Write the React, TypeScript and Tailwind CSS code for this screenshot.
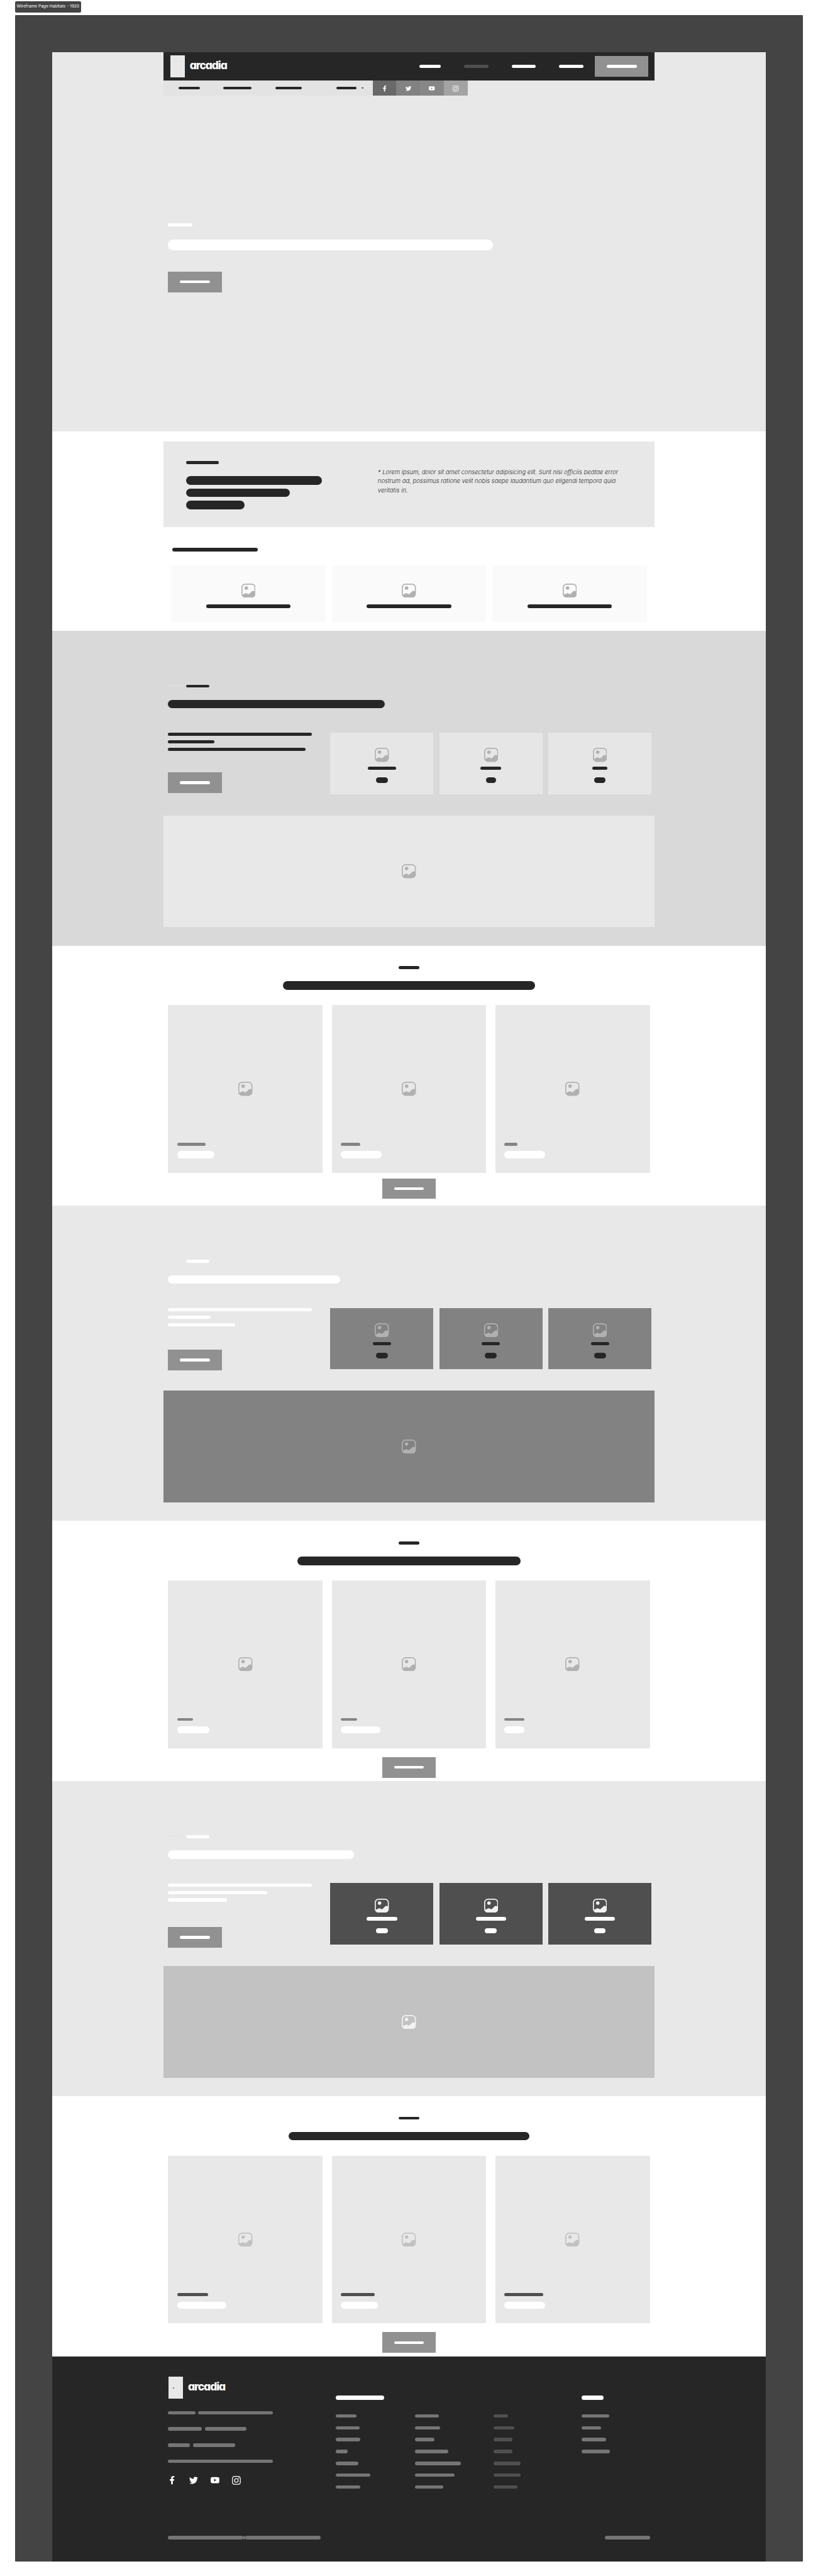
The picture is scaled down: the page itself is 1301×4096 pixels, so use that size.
import type { ReactNode } from "react";
import { FaFacebookF, FaTwitter } from "react-icons/fa";
import { BsYoutube, BsInstagram } from "react-icons/bs";

// One spacing step equals one wireframe unit; see --spacing on the root element.
const units = (n: number) => `calc(var(--spacing) * ${n})`;

function Bar({ w, className }: { w: number; className: string }) {
  return <div className={`shrink-0 rounded-full ${className}`} style={{ width: units(w) }} />;
}

function Placeholder({ className = "text-[#b1b1b1]" }: { className?: string }) {
  return (
    <svg viewBox="0 0 38 38" className={`size-38 shrink-0 ${className}`} fill="none">
      <rect x="1.4" y="1.4" width="35.2" height="35.2" rx="9.2" stroke="currentColor" strokeWidth="2.8" />
      <circle cx="13" cy="11.7" r="4.7" fill="currentColor" />
      <path
        d="M2 30.6 10.4 26.2Q12.3 25.2 14.2 26.3L17.4 28.1Q19.3 28.8 21.2 27.6L28.6 20.4Q31.3 18.4 34 20L36.5 21.8V28.5Q36 36.6 28 37H10Q3 36.6 2 30.6Z"
        fill="currentColor"
      />
    </svg>
  );
}

function Button({ className = "h-56" }: { className?: string }) {
  return (
    <div className={`flex w-144 shrink-0 items-center justify-center bg-[#919191] ${className}`}>
      <Bar w={81} className="h-8 bg-white" />
    </div>
  );
}

function Logo({ dot = false }: { dot?: boolean }) {
  return (
    <div className="flex items-center gap-13">
      <div className="h-59.5 w-39 bg-[#e8e8e8]">
        {dot && <div className="mt-29 ml-11.5 size-4 rounded-full bg-[#555]" />}
      </div>
      <div className="-mt-7 font-['Inter'] text-[17.4px] leading-none font-extrabold tracking-[-0.06em] text-white [font-feature-settings:'cv11']">
        arcadia
      </div>
    </div>
  );
}

function Social({ className, children }: { className: string; children: ReactNode }) {
  return <div className={`flex h-40 w-64 items-center justify-center pt-2 text-white ${className}`}>{children}</div>;
}

function Hero() {
  return (
    <section className="h-1020 bg-[#e8e8e8]">
      <div className="mx-auto w-1320">
        <header className="flex h-77.25 items-center justify-between bg-[#262626] pr-16 pl-18">
          <Logo />
          <nav className="flex items-center">
            <Bar w={58} className="mr-63 h-8 bg-white" />
            <Bar w={65} className="mr-62.5 h-8 bg-[#4f4f4f]" />
            <Bar w={65} className="mr-62.5 h-8 bg-white" />
            <Bar w={65} className="mr-31.5 h-8 bg-white" />
            <Button className="h-55.5" />
          </nav>
        </header>
        <div className="flex">
          <div className="flex h-40 w-562 items-center bg-[#e3e3e3] pl-40">
            <Bar w={57} className="mr-63.5 h-7.5 bg-[#262626]" />
            <Bar w={76} className="mr-63.5 h-7.5 bg-[#262626]" />
            <Bar w={71} className="mr-94 h-7.5 bg-[#262626]" />
            <Bar w={54} className="mr-13 h-7.5 bg-[#262626]" />
            <svg viewBox="0 0 6 4" className="-mt-1 h-4 w-6">
              <path d="M0 0h6L3 4z" fill="#262626" />
            </svg>
          </div>
          <Social className="bg-[#696969]"><FaFacebookF className="size-16" /></Social>
          <Social className="bg-[#828282]"><FaTwitter className="size-16" /></Social>
          <Social className="bg-[#878787]"><BsYoutube className="size-16" /></Social>
          <Social className="bg-[#a3a3a3]"><BsInstagram className="size-16" /></Social>
        </div>
        <div className="px-12 pt-343">
          <Bar w={66} className="h-8 bg-white" />
          <Bar w={873.5} className="mt-37 h-28 bg-white" />
          <div className="mt-57">
            <Button className="h-55.5" />
          </div>
        </div>
      </div>
    </section>
  );
}

function Intro() {
  return (
    <section className="h-535.75 bg-white pt-27">
      <div className="mx-auto flex h-230.5 w-1320 bg-[#e8e8e8] pl-60">
        <div className="w-516 pt-53">
          <Bar w={88.5} className="h-8 bg-[#262626]" />
          <Bar w={365} className="mt-33 h-23 bg-[#262626]" />
          <Bar w={279} className="mt-10 h-23 bg-[#262626]" />
          <Bar w={158} className="mt-10 h-23 bg-[#262626]" />
        </div>
        <p className="pt-71.5 font-['Inter'] text-[9.46px] leading-[14.25px] font-light tracking-[0.002em] whitespace-nowrap text-[#262626] italic">
          * Lorem ipsum, dolor sit amet consectetur adipisicing elit. Sunt nisi officiis beatae error
          <br />
          nostrum ad, possimus ratione velit nobis saepe laudantium quo eligendi tempora quia
          <br />
          veritatis in.
        </p>
      </div>
      <div className="mx-auto w-1280 pt-55.5">
        <Bar w={230} className="ml-4 h-10 bg-[#262626]" />
        <div className="mt-38 flex gap-16">
          {[0, 1, 2].map((i) => (
            <div key={i} className="flex h-151 w-416 flex-col items-center bg-[#fafafa] pt-48.5">
              <Placeholder />
              <Bar w={227} className="mt-18 h-10.5 bg-[#262626]" />
            </div>
          ))}
        </div>
      </div>
    </section>
  );
}

type HabitatProps = {
  bg: string;
  line: string;
  text: string;
  title: number;
  lines: number[];
  buttonGap: string;
  card: string;
  cardText: string;
  icon: string;
  labels: number[];
  counts: number[];
  image: string;
};

function Habitat(p: HabitatProps) {
  return (
    <section className={`h-847.25 pt-145.5 ${p.bg}`}>
      <div className="mx-auto w-1320">
        <div className="pl-12">
          <div className="flex gap-8">
            <div className={`mt-2 h-1.75 w-40 ${p.line}`} />
            <Bar w={63.5} className={`h-7.5 ${p.text}`} />
          </div>
          <Bar w={p.title} className={`mt-33.5 h-23 ${p.text}`} />
          <div className="mt-65 flex h-165.5">
            <div className="w-436.5">
              <div className="flex flex-col gap-11 pt-0.5">
                {p.lines.map((w, i) => (
                  <Bar key={i} w={w} className={`h-9 ${p.text}`} />
                ))}
              </div>
              <div className={p.buttonGap}>
                <Button />
              </div>
            </div>
            <div className="flex gap-16">
              {p.labels.map((w, i) => (
                <div key={i} className={`flex w-277.25 flex-col items-center pt-41.25 ${p.card}`}>
                  <Placeholder className={p.icon} />
                  <Bar w={w} className={`mt-12 h-9 ${p.cardText}`} />
                  <Bar w={p.counts[i]} className={`mt-21 h-14 ${p.cardText}`} />
                </div>
              ))}
            </div>
          </div>
        </div>
        <div className={`mt-57.5 flex h-300 items-center justify-center ${p.image}`}>
          <Placeholder className={p.icon} />
        </div>
      </div>
    </section>
  );
}

type GalleryProps = {
  title: number;
  captions: number[];
  names: number[];
  caption: string;
  icon: string;
  buttonGap: string;
};

function Gallery(p: GalleryProps) {
  return (
    <section className="flex h-700 flex-col items-center bg-white pt-55">
      <Bar w={57} className="h-8 bg-[#262626]" />
      <Bar w={p.title} className="mt-33 h-23 bg-[#262626]" />
      <div className="mt-41 flex gap-24">
        {p.captions.map((w, i) => (
          <div key={i} className="h-451 w-416 bg-[#e8e8e8] px-24 pt-206.5">
            <div className="flex justify-center">
              <Placeholder className={p.icon} />
            </div>
            <Bar w={w} className={`mt-125.5 h-8 ${p.caption}`} />
            <Bar w={p.names[i]} className="mt-14.5 h-19.5 bg-white" />
          </div>
        ))}
      </div>
      <div className={p.buttonGap}>
        <Button className="h-55.5" />
      </div>
    </section>
  );
}

const contactRows = [[73, 200], [91, 111.5], [58.5, 114], [282.5]];

function Links({ widths, className }: { widths: number[]; className: string }) {
  return (
    <div className="flex flex-col gap-23">
      {widths.map((w, i) => (
        <Bar key={i} w={w} className={`h-9 ${className}`} />
      ))}
    </div>
  );
}

function Footer() {
  return (
    <footer className="flex h-551 flex-col bg-[#262626] pt-54 pb-59">
      <div className="mx-auto flex w-1296">
        <div className="w-451.5">
          <div className="pl-1.5">
            <Logo dot />
          </div>
          <div className="mt-33.5 flex flex-col gap-33.75">
            {contactRows.map((row, i) => (
              <div key={i} className="flex gap-8">
                {row.map((w, j) => (
                  <Bar key={j} w={w} className="h-9.5 bg-[#757575]" />
                ))}
              </div>
            ))}
          </div>
          <div className="mt-36 flex gap-34 text-white">
            <FaFacebookF className="h-22.5 w-22.5" />
            <FaTwitter className="ml-1 h-23.5 w-23.5" />
            <BsYoutube className="size-23.5" />
            <BsInstagram className="size-23.5" />
          </div>
        </div>
        <div className="w-661 pt-51.5">
          <Bar w={129.5} className="h-12 bg-white" />
          <div className="mt-37.5 flex">
            <div className="w-212"><Links widths={[55.5, 63, 65, 31, 60.5, 93, 65]} className="bg-[#757575]" /></div>
            <div className="w-212"><Links widths={[65, 67.5, 52.5, 90, 124, 107, 76]} className="bg-[#757575]" /></div>
            <Links widths={[39, 56, 50, 51, 72, 72, 65]} className="bg-[#4f4f4f]" />
          </div>
        </div>
        <div className="pt-51.5">
          <Bar w={59} className="h-12 bg-white" />
          <div className="mt-37.5">
            <Links widths={[75, 52.5, 66, 76]} className="bg-[#757575]" />
          </div>
        </div>
      </div>
      <div className="mx-auto mt-auto flex w-1296 items-center">
        <Bar w={203} className="h-9.5 bg-[#757575]" />
        <Bar w={5} className="h-9.5 bg-[#757575]" />
        <Bar w={202} className="h-9.5 bg-[#757575]" />
        <Bar w={120.5} className="ml-auto h-9.5 bg-[#757575]" />
      </div>
    </footer>
  );
}

export default function App() {
  return (
    <div className="h-[4096px] w-[1301px] overflow-hidden bg-white pt-4 pl-40 [--spacing:0.59125px]">
      <div className="flex h-30 w-178 items-center justify-center rounded-[2px] bg-[#444] font-['Inter'] text-[6.6px] whitespace-nowrap text-white">
        Wireframe Page Habitats - 1920
      </div>
      <div className="mt-6 w-2120.5 rounded-[1px] bg-[#444] px-100 pt-100">
        <Hero />
        <Intro />
        <Habitat
          bg="bg-[#d9d9d9]" line="bg-[#e3e3e3]" text="bg-[#262626]" title={583} lines={[386.5, 125, 369.5]}
          buttonGap="mt-57.5" card="bg-[#e6e6e6]" cardText="bg-[#262626]" icon="text-[#b1b1b1]"
          labels={[76, 56, 41.5]} counts={[32, 28, 31]} image="bg-[#e8e8e8]"
        />
        <Gallery title={678} captions={[77, 52.5, 35]} names={[100, 111, 111]} caption="bg-[#848484]" icon="text-[#b1b1b1]" buttonGap="mt-15" />
        <Habitat
          bg="bg-[#e8e8e8]" line="bg-[#e8e8e8]" text="bg-white" title={463.5} lines={[386.5, 114.5, 179.5]}
          buttonGap="mt-63" card="bg-[#828282]" cardText="bg-[#262626]" icon="text-[#b1b1b1]"
          labels={[49, 49, 49]} counts={[32, 32, 32]} image="bg-[#828282]"
        />
        <Gallery title={601} captions={[43, 44.5, 54.5]} names={[87.5, 106.5, 54.5]} caption="bg-[#848484]" icon="text-[#b1b1b1]" buttonGap="mt-24" />
        <Habitat
          bg="bg-[#e8e8e8]" line="bg-[#e0e0e0]" text="bg-white" title={500} lines={[386.5, 266, 159]}
          buttonGap="mt-68" card="bg-[#4f4f4f]" cardText="bg-white" icon="text-[#f2f2f2]"
          labels={[82, 82, 82]} counts={[32, 32, 31]} image="bg-[#c2c2c2]"
        />
        <Gallery title={649} captions={[84, 91, 104.5]} names={[133, 101, 111]} caption="bg-[#4f4f4f]" icon="text-[#c2c2c2]" buttonGap="mt-24" />
        <Footer />
      </div>
    </div>
  );
}
